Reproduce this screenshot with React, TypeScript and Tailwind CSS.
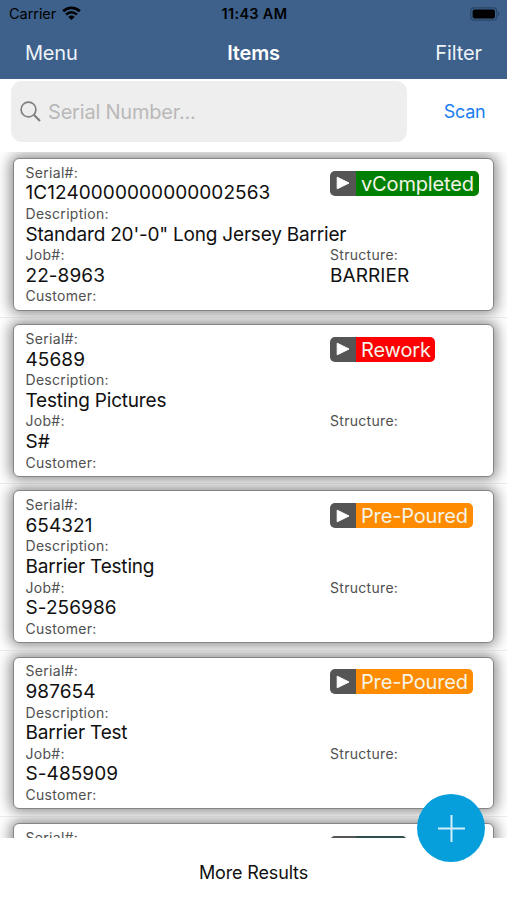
interface Item {
  serial: string;
  description: string;
  job: string;
  structure: string;
  status: string;
  statusClass: string;
}

const items: Item[] = [
  {
    serial: "1C1240000000000002563",
    description: "Standard 20'-0\" Long Jersey Barrier",
    job: "22-8963",
    structure: "BARRIER",
    status: "vCompleted",
    statusClass: "bg-[#008000] w-[123px]",
  },
  {
    serial: "45689",
    description: "Testing Pictures",
    job: "S#",
    structure: "",
    status: "Rework",
    statusClass: "bg-[#ff0000] w-[79px]",
  },
  {
    serial: "654321",
    description: "Barrier Testing",
    job: "S-256986",
    structure: "",
    status: "Pre-Poured",
    statusClass: "bg-[#ff8c00] w-[117px]",
  },
  {
    serial: "987654",
    description: "Barrier Test",
    job: "S-485909",
    structure: "",
    status: "Pre-Poured",
    statusClass: "bg-[#ff8c00] w-[117px]",
  },
];

const Label = ({ children }: { children: string }) => (
  <div className="h-[20.6px] text-[14px] leading-[20px] tracking-[0.3px] text-[#505050]">
    {children}
  </div>
);

const Value = ({ children }: { children: string }) => (
  <div className="h-[20.6px] text-[19px] leading-[20.6px] tracking-[0.07px] text-[#101010]">
    {children}
  </div>
);

const StatusBadge = ({ status, className }: { status: string; className: string }) => (
  <div className="flex h-[25px] w-fit overflow-hidden rounded-[5px]">
    <div className="flex w-[26px] items-center justify-center bg-[#555555]">
      <svg width="14" height="14" viewBox="0 0 14 14" fill="#fff" stroke="#fff">
        <path d="M1.2 1.2 L13 7 L1.2 12.8 Z" strokeWidth="1" strokeLinejoin="round" />
      </svg>
    </div>
    <div
      className={`${className} pl-[5px] text-[20px] leading-[26px] tracking-[-0.15px] whitespace-nowrap text-[#f4f4e8]`}
    >
      {status}
    </div>
  </div>
);

const ItemRow = ({ item }: { item: Item }) => (
  <li className="h-[166.2px] shrink-0 overflow-hidden px-[13px] pt-[6px] shadow-[inset_0_-1px_0_#ececec]">
    <div className="flex h-[152.5px] rounded-[6px] border border-[#858585] bg-white pt-[3.8px] pl-[11.5px] shadow-[0_0_14px_3px_rgba(0,0,0,0.45)]">
      <div className="w-[304.5px] whitespace-nowrap">
        <Label>Serial#:</Label>
        <Value>{item.serial}</Value>
        <Label>Description:</Label>
        <div className="*:tracking-[-0.2px]">
          <Value>{item.description}</Value>
        </div>
        <Label>Job#:</Label>
        <Value>{item.job}</Value>
        <Label>Customer:</Label>
      </div>
      <div>
        <div className="h-[82.4px] pt-[8px]">
          <StatusBadge status={item.status} className={item.statusClass} />
        </div>
        <Label>Structure:</Label>
        <Value>{item.structure}</Value>
      </div>
    </div>
  </li>
);

const StatusBar = () => (
  <div className="grid h-[27px] grid-cols-3 items-center pr-[7px] pl-[9px] text-[14.5px] text-black">
    <div className="flex items-center gap-[6px]">
      <span className="tracking-[-0.05px]">Carrier</span>
      <svg className="-mt-[2px]" width="19" height="14" viewBox="0 0 19 14" fill="none" stroke="#000">
        <path d="M1.2 5.2 A11.8 11.8 0 0 1 17.8 5.2" strokeWidth="2.8" />
        <path d="M4.1 8.6 A7.4 7.4 0 0 1 14.9 8.6" strokeWidth="2.6" />
        <path d="M9.5 14 L6.3 10.9 A4.3 4.3 0 0 1 12.7 10.9 Z" fill="#000" stroke="none" />
      </svg>
    </div>
    <span className="text-center font-semibold tracking-[0.3px] whitespace-nowrap">
      11:43 AM
    </span>
    <svg className="justify-self-end" width="30" height="14" viewBox="0 0 30 14">
      <rect x="0.8" y="0.8" width="26" height="12.4" rx="3.5" fill="none" stroke="#2b4666" strokeWidth="1.2" />
      <rect x="2.6" y="2.5" width="22.4" height="9" rx="2" fill="#000" />
      <path d="M28 4.8 C29.8 5.4 29.8 8.6 28 9.2 Z" fill="#2b4666" />
    </svg>
  </div>
);

export default function App() {
  return (
    <div className="relative flex h-[900px] w-[507px] flex-col overflow-hidden bg-white font-['Inter',sans-serif]">
      <header className="h-[79px] shrink-0 bg-[#3d618b]">
        <StatusBar />
        <nav className="grid h-[51px] grid-cols-3 items-center px-[25px] text-[20px] tracking-[-0.2px] text-[#eef3f8]">
          <button className="text-left">Menu</button>
          <h1 className="text-center font-semibold text-white">Items</h1>
          <button className="text-right tracking-[-0.1px]">Filter</button>
        </nav>
      </header>

      <div className="flex h-[73px] shrink-0 items-start pt-[2px] pl-[11px]">
        <div className="flex h-[61px] w-[396px] shrink-0 items-center gap-[7px] rounded-[11px] bg-[#eeeeee] pl-[9px]">
          <svg width="21" height="21" viewBox="0 0 21 21" fill="none" stroke="#808080">
            <circle cx="8.5" cy="8.5" r="7.4" strokeWidth="1.7" />
            <path d="M13.8 13.8 L20 20" strokeWidth="2.2" />
          </svg>
          <span className="text-[20px] tracking-[-0.2px] text-[#b9b9b9]">
            Serial Number...
          </span>
        </div>
        <button className="h-[61px] flex-1 pl-[15px] text-center text-[18px] tracking-[-0.3px] text-[#1a7df0]">
          Scan
        </button>
      </div>

      <ul className="flex h-[686px] shrink-0 flex-col overflow-hidden">
        {items.map((item) => (
          <ItemRow key={item.serial} item={item} />
        ))}
        {/* next row, scrolled under the footer */}
        <li className="h-[22px] shrink-0 overflow-hidden px-[13px] pt-[6px]">
          <div className="flex h-[152px] items-start rounded-[6px] border border-[#858585] bg-white pt-[3.8px] pl-[11.5px] shadow-[0_0_14px_3px_rgba(0,0,0,0.45)]">
            <div className="w-[304.5px]">
              <Label>Serial#:</Label>
            </div>
            <div className="pt-[8px]">
              <StatusBadge status="" className="bg-[#2f4f4f] w-[51px]" />
            </div>
          </div>
        </li>
      </ul>

      <button className="flex-1 pt-[7px] text-center text-[18px] tracking-[-0.15px] text-[#101010]">
        More Results
      </button>

      <button className="absolute top-[794px] left-[417px] flex size-[68px] items-center justify-center rounded-full bg-[#069fdc]">
        <svg width="27" height="27" viewBox="0 0 27 27" stroke="#d4effa" strokeWidth="2">
          <path d="M13.5 0 V27 M0 13.5 H27" />
        </svg>
      </button>
    </div>
  );
}
